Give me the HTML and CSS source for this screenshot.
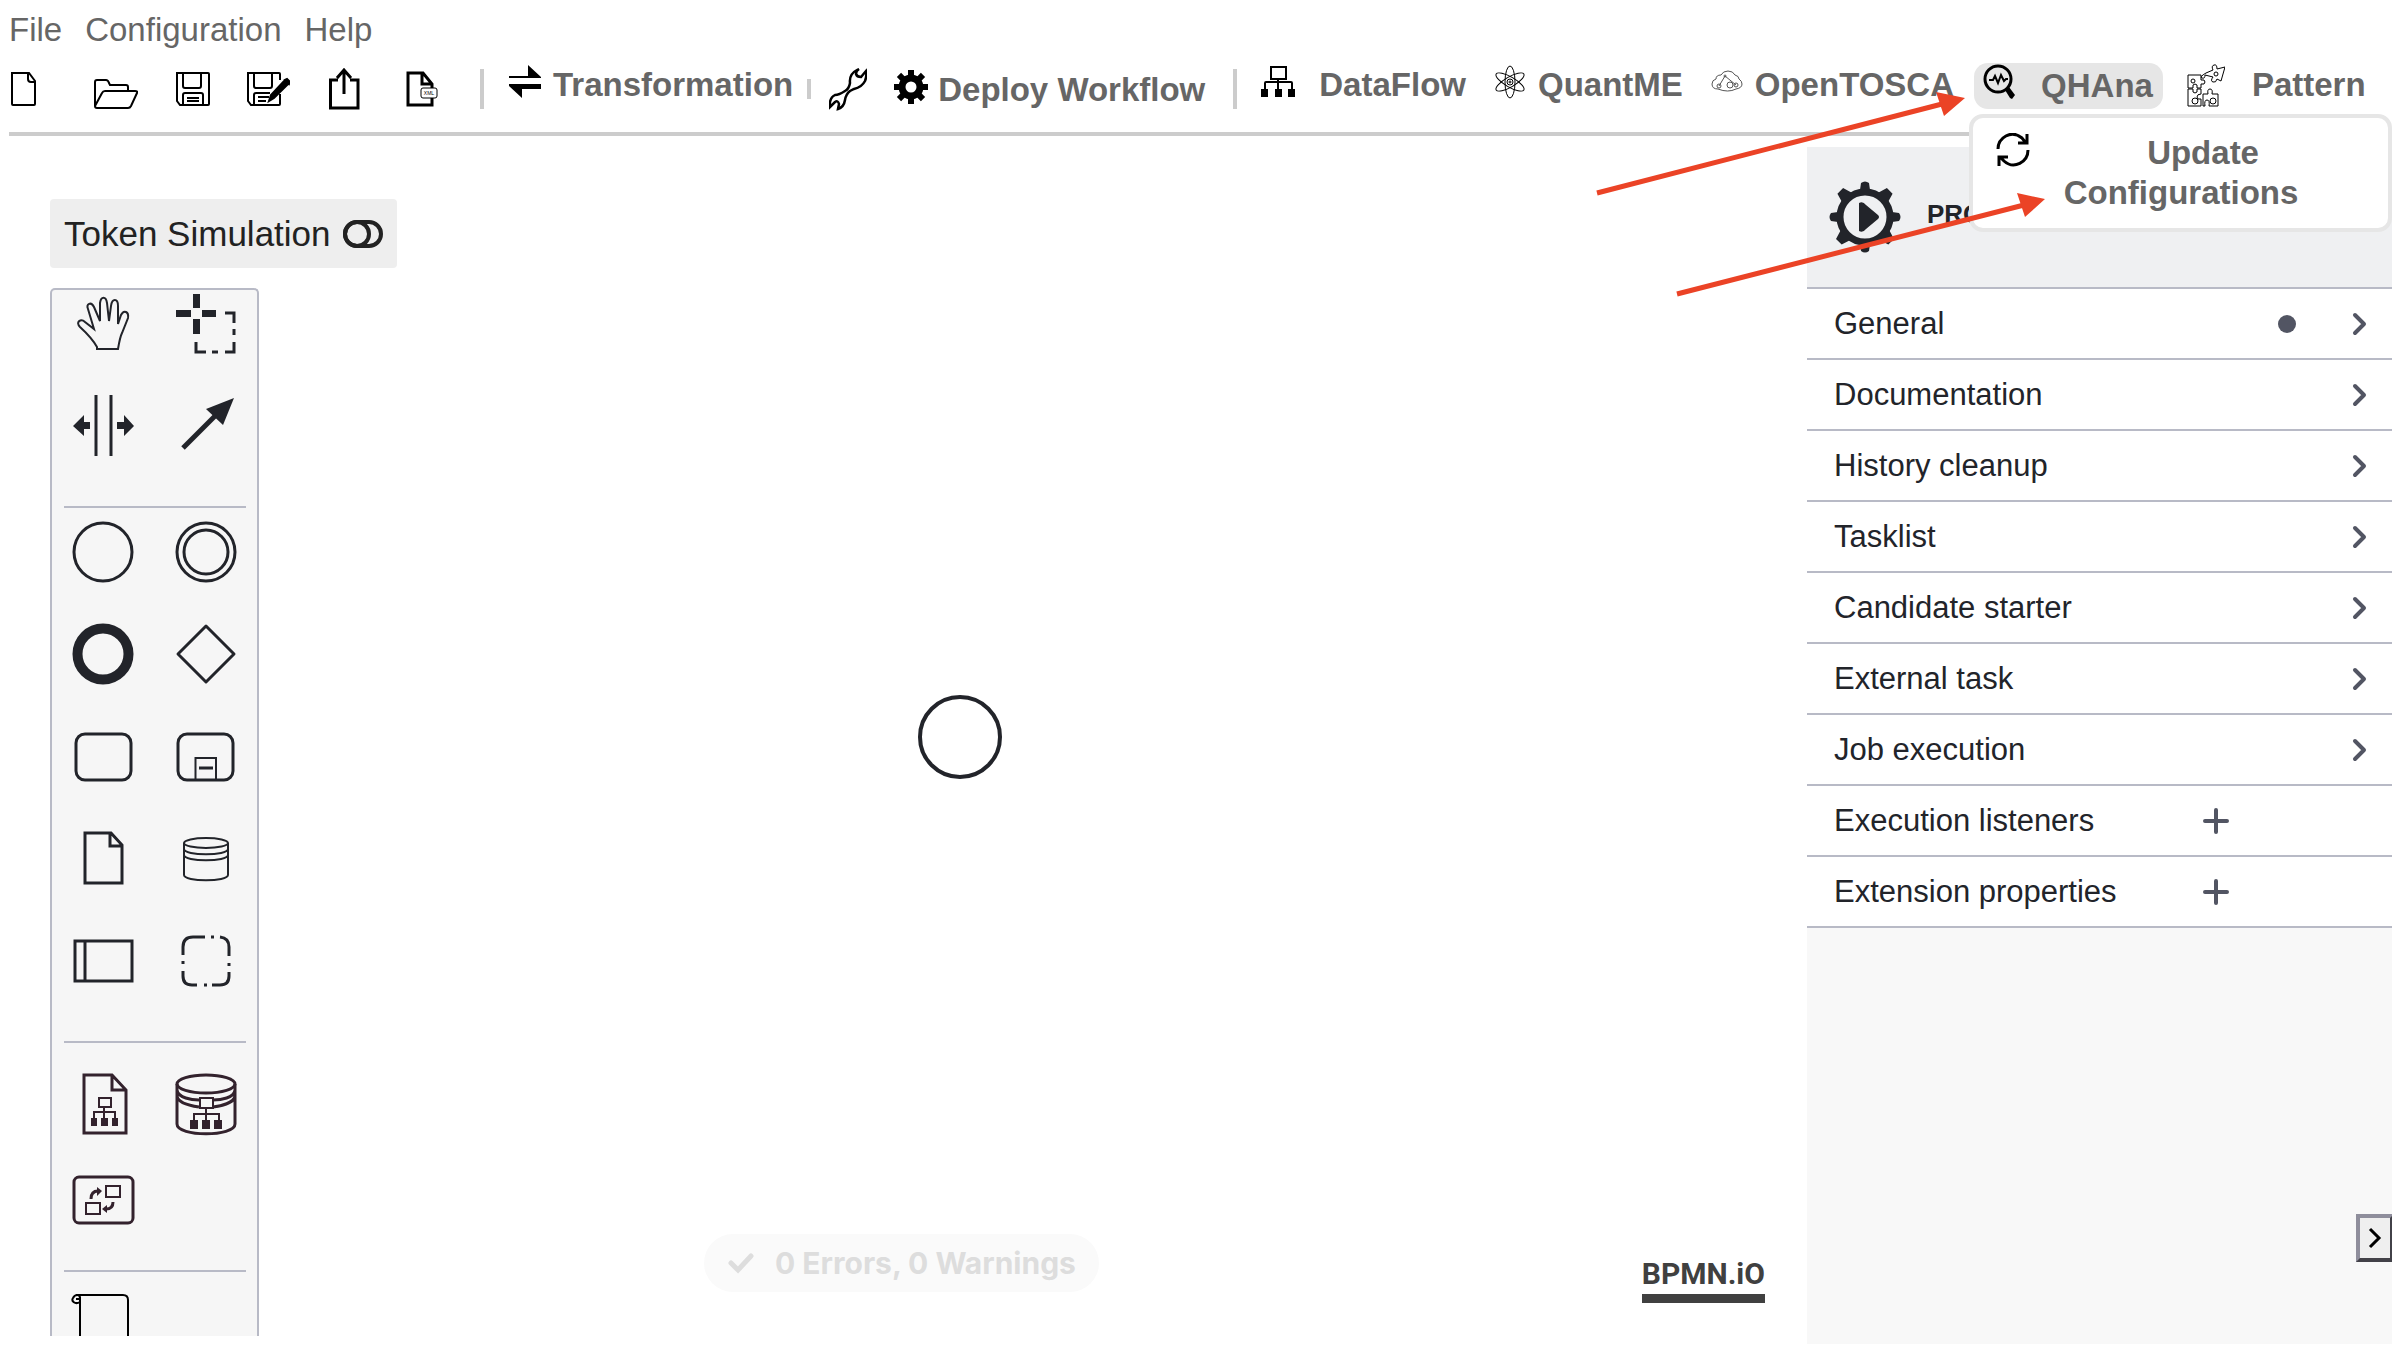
FILE: index.html
```html
<!DOCTYPE html>
<html lang="en">
<head>
<meta charset="utf-8">
<title>Workflow Modeler</title>
<link rel="stylesheet" href="styles.css">
</head>
<body>
<header class="header">
  <nav class="menu">
    <button type="button">File</button>
    <button type="button">Configuration</button>
    <button type="button">Help</button>
  </nav>
  <div class="toolbar">
    <div class="file-tools">
      <button type="button" aria-label="New diagram"><svg width="52" height="44" viewBox="0 0 52 44" class="line"><path d="M2 6h17l6 8v23q0 1-1 1H3q-1 0-1-1zM18 6v6q0 3 3 3h5"/></svg></button>
      <button type="button" aria-label="Open diagram"><svg width="44" height="44" viewBox="0 0 44 44" class="line"><path d="M1 39V15q0-2 2-2h9q2 0 3 3l1 2h16q2 0 2 2v4M1 39l7-13q1-2 3-2h30q3 0 2 2l-6 13q-1 2-3 2H3q-2 0-2-2z"/></svg></button>
      <button type="button" aria-label="Save diagram"><svg width="44" height="44" viewBox="0 0 44 44" class="line"><path d="M7 6h31q1 0 1 1v30q0 1-1 1H10l-3-4zM13 6v13q0 2 2 2h14q2 0 2-2V6M13 38V28q0-2 2-2h16q2 0 2 2v10M17 31h12M17 34h12"/></svg></button>
      <button type="button" aria-label="Save diagram as"><svg width="44" height="44" viewBox="0 0 44 44" class="line"><path d="M34 27v10q0 1-1 1H5l-3-4V6h31q1 0 1 1v6M8 6v13q0 2 2 2h14q2 0 2-2V6M8 38V28q0-2 2-2h14M12 30h11M12 34h8"/><path d="M23 34l2-6 13-14 4 3-14 14zM39 13l2-1 3 3-1 2z" fill="#000"/></svg></button>
      <button type="button" aria-label="Export"><svg width="44" height="44" viewBox="0 0 44 44" class="line thick"><path d="M16 13H8.500v28H36V13H28M22 27V4M15 11l7-8 7 8"/></svg></button>
      <button type="button" aria-label="Save as XML"><svg width="44" height="44" viewBox="0 0 44 44" class="line"><path class="thick" d="M34 30v8H10V6h15l9 11v5M24 6v11h9"/><rect x="23" y="21" width="16" height="10" rx="2" fill="#fff" stroke-width="1"/><text x="31" y="28" class="tiny">XML</text></svg></button>
    </div>
    <span class="sep"></span>
    <button type="button" class="tool transformation"><svg width="32" height="46" viewBox="0 0 32 46"><path d="M0 14h19V3l13 12v1H0zM32 22v5H13v9L0 24v-2z"/></svg>Transformation</button>
    <span class="sep short"></span>
    <button type="button" class="tool-icon" aria-label="Configure"><svg width="38" height="44" viewBox="0 0 38 44" class="line"><path stroke-width="2.500" d="M28 3q-8 4-7 13-1 6-5 8-6 4-10 4-6 3-5 12l5-5q3-2 4 2l-1 5q6-2 7-9 1-6 5-9l4-2q8-2 11-8 2-5 1-10l-5 6q-4 0-5-3 0-3 3-5z"/></svg></button>
    <button type="button" class="tool deploy"><svg width="34" height="46" viewBox="0 0 34 46"><g transform="translate(17 20)"><circle r="9" fill="none" stroke="#000" stroke-width="7"/><path d="M-3-17h6v8h-6zM-3 9h6v8h-6zM-17-3h8v6h-8zM9-3h8v6H9z"/><path transform="rotate(45)" d="M-3-17h6v8h-6zM-3 9h6v8h-6zM-17-3h8v6h-8zM9-3h8v6H9z"/></g></svg>Deploy Workflow</button>
    <span class="sep"></span>
    <div class="plugins">
      <button type="button" class="tool dataflow"><svg width="34" height="46" viewBox="0 0 34 46"><path class="line" d="M10 5h15v12H10zM17 17v10M4 27v-6q0-1 1-1h25q1 0 1 1v6M17 20v7"/><path d="M0 27h7v8H0zM14 27h7v8h-7zM27 27h7v8h-7z"/></svg>DataFlow</button>
      <button type="button" class="tool"><svg width="32" height="46" viewBox="0 0 32 46" class="line thin"><ellipse cx="16" cy="20" rx="5" ry="16"/><ellipse cx="16" cy="20" rx="5" ry="16" transform="rotate(60 16 20)"/><ellipse cx="16" cy="20" rx="5" ry="16" transform="rotate(120 16 20)"/><circle cx="16" cy="20" r="3"/><circle cx="16" cy="20" r="1"/></svg>QuantME</button>
      <button type="button" class="tool"><svg width="32" height="46" viewBox="0 0 32 46" class="line faint"><path d="M7 27q-6 0-6-5 0-4 4-5 0-4 5-4 2-4 7-4 5 0 7 4 4 1 4 4 3 2 3 5 0 4-6 5-8 4-18 0z"/><path d="M8 24l6-10 11 9"/><circle cx="14" cy="14" r="1"/><circle cx="8" cy="24" r="2"/><circle cx="19" cy="23" r="3"/><circle cx="25" cy="23" r="2"/></svg>OpenTOSCA</button>
      <div class="plugin-menu">
        <button type="button" class="tool active"><svg width="32" height="46" viewBox="0 0 32 46"><circle cx="15" cy="16" r="13" class="line thick"/><path class="line" d="M6 17h4l2-4 3 7 3-8 3 6 2-2h2"/><path d="M22 27l4-3 6 8-3 4-2-1z"/></svg>QHAna</button>
        <div class="popup">
          <button type="button" class="popup-item"><svg width="34" height="34" viewBox="0 0 34 34" class="line thick"><path d="M2 16C2 5 15-4 26 5l4 5M31 1v9h-9M32 17c0 12-14 20-24 11l-4-4M3 33v-9h9"/></svg><span>Update Configurations</span></button>
        </div>
      </div>
      <button type="button" class="tool pattern"><svg width="38" height="46" viewBox="0 0 38 46" class="line thin"><path d="M1 13h13v5q4-1 4 2t-4 2v4h-4q1-4-2-4t-2 4H1zM1 27h5q-1 4 2 4t2-4h4v5q-4 0-4 3t4 2v7H1zM16 44V32h5q-1-5 2-5t2 5h6v12h-9q1-6-2-6t-2 6zM19 11l7-3q-2-4 1-5t3 4l8-2-4 14-4-2q-1 4-4 3t0-5l-8-2q0 4-3 3t4-5z"/><circle cx="6" cy="19" r="2"/><circle cx="8" cy="39" r="3"/><circle cx="26" cy="39" r="3"/><circle cx="29" cy="12" r="2"/></svg>Pattern</button>
    </div>
  </div>
</header>

<main class="workspace">
  <section class="canvas" aria-label="Diagram">
    <button type="button" class="token">Token Simulation <svg width="40" height="28" viewBox="0 0 40 28" fill="none" stroke="#222" stroke-width="4"><rect x="2" y="2" width="36" height="24" rx="12"/><circle cx="14" cy="14" r="12"/></svg></button>
    <div class="palette">
      <div class="group first">
        <button type="button" aria-label="Hand tool"><svg viewBox="0 0 64 64"><path stroke-width="2" d="M26 57h21q2-12 4-16l6-15c1-6-4-9-7-3l-3 9V14c0-8-6-8-7 0l-2 15-2-18c-1-7-6-7-7 0v18l-6-14c-3-6-8-3-6 2l6 20-9-7c-4-4-10 0-5 5q12 11 17 20z"/></svg></button>
        <button type="button" aria-label="Lasso tool"><svg viewBox="0 0 64 64"><path class="solid" d="M2 18h15v7H2zM28 18h14v7H28zM19 2h7v14h-7zM19 27h7v15h-7z"/><path d="M51 21h9v10M60 37v6M60 50v10h-9M44 60h-6M32 60H22V50"/></svg></button>
        <button type="button" aria-label="Space tool"><svg viewBox="0 0 64 64"><path d="M25 1v61M40 1v61"/><path class="solid" d="M2 32l11-11v7h6v7h-6v7zM63 32L53 21v7h-7v7h7v7z"/></svg></button>
        <button type="button" aria-label="Connect"><svg viewBox="0 0 64 64"><path stroke-width="5" d="M9 54l32-32"/><path class="solid" d="M60 4L49 31 32 15z"/></svg></button>
      </div>
      <hr>
      <div class="group events">
        <button type="button" aria-label="Start event"><svg viewBox="0 0 64 64"><circle cx="32" cy="32" r="29"/></svg></button>
        <button type="button" aria-label="Intermediate event"><svg viewBox="0 0 64 64"><circle cx="32" cy="32" r="29"/><circle cx="32" cy="32" r="22"/></svg></button>
        <button type="button" aria-label="End event"><svg viewBox="0 0 64 64"><circle cx="32" cy="32" r="25.500" stroke-width="10"/></svg></button>
        <button type="button" aria-label="Gateway"><svg viewBox="0 0 64 64"><path stroke-linejoin="round" d="M32 4l28 28-28 28L4 32z"/></svg></button>
        <button type="button" aria-label="Task"><svg viewBox="0 0 64 64"><rect x="5" y="10" width="55" height="46" rx="9"/></svg></button>
        <button type="button" aria-label="Sub-process"><svg viewBox="0 0 64 64"><rect x="4" y="10" width="55" height="46" rx="9"/><path stroke-width="2" d="M21.500 56V34H42v22"/><path d="M25 44h14"/></svg></button>
        <button type="button" aria-label="Data object"><svg viewBox="0 0 64 64"><path d="M14 7h26l11 12v38H14zM39 7v13h12"/></svg></button>
        <button type="button" aria-label="Data store"><svg viewBox="0 0 64 64"><path stroke-width="2" d="M10 17v32c0 7 44 7 44 0V17M10 23c0 7 44 7 44 0M10 29c0 7 44 7 44 0"/><ellipse stroke-width="2" cx="32" cy="17" rx="22" ry="5"/></svg></button>
        <button type="button" aria-label="Participant"><svg viewBox="0 0 64 64"><path d="M4 13h57v40H4zM14 13v40"/></svg></button>
        <button type="button" aria-label="Group"><svg viewBox="0 0 64 64"><path d="M31 9H19q-10 0-10 10v8M9 33v3M9 43v5q0 9 9 9h5M30 57h3M38 57h8q9 0 9-9v-4M55 38v-3M55 28v-9q0-9-9-10M40 9h-3"/></svg></button>
      </div>
      <hr>
      <div class="group data">
        <button type="button" aria-label="Data map object"><svg viewBox="0 0 64 64"><path d="M13 3h28l14 15v43H13zM41 3v15h14"/><path stroke-width="2" d="M28 26h12v9H28zM33 35v11M23 46v-6h21v6"/><path class="solid" d="M20 46h6v8h-6zM30 46h7v8h-7zM41 46h6v8h-6z"/></svg></button>
        <button type="button" aria-label="Data map store"><svg viewBox="0 0 64 64"><ellipse cx="32" cy="12" rx="29" ry="9"/><path d="M3 12v40c0 13 58 13 58 0V12M3 18c1 8 15 10 22 10M39 28c8 0 21-2 22-10M3 24c1 7 15 10 22 11M39 35c8-1 21-4 22-11"/><path stroke-width="2" d="M26 26h13v10H26zM32 36v12M20 48v-6h25v6"/><path class="solid" d="M16 48h8v9h-8zM28 48h8v9h-8zM40 48h8v9h-8z"/></svg></button>
        <button type="button" aria-label="Transformation task"><svg viewBox="0 0 64 64"><rect x="3" y="9" width="59" height="46" rx="5"/><path stroke-width="2" d="M35 18h14v11H35zM15 35h14v11H15z"/><path d="M20 31q0-8 7-8M42 34q0 7-7 7"/><path class="solid" d="M26 19l5 4-5 5zM36 37l-5 4 5 4z"/></svg></button>
      </div>
      <hr>
      <div class="group policies">
        <button type="button" aria-label="Policy"><svg viewBox="0 0 64 64"><path stroke="#000" stroke-width="2" d="M5 1h47q5 0 5 5v58M9 64V3M9 8c-5 3-9-1-7-4 2-4 7-4 7 0M5 5h3"/></svg></button>
      </div>
    </div>
    <svg class="start-event" width="84" height="84" viewBox="0 0 84 84"><circle cx="42" cy="42" r="40"/></svg>
    <button type="button" class="status"><svg width="28" height="22" viewBox="0 0 28 22"><path d="M4 11l7 7L24 4"/></svg>0 Errors, 0 Warnings</button>
    <a class="logo" href="#bpmn">BPMN.iO</a>
  </section>

  <aside class="properties" aria-label="Properties">
    <div class="panel-head">
      <svg width="72" height="72" viewBox="-36 -36 72 72" fill="#22242a"><circle r="25" fill="none" stroke="#22242a" stroke-width="7"/><path d="M-5-27l1-7q4-3 8 0l1 7zM-5 27l1 7q4 3 8 0l1-7zM-27-5l-7 1q-3 4 0 8l7 1zM27-5l7 1q3 4 0 8l-7 1z"/><path transform="rotate(45)" d="M-8-26l3-10h8l3 10zM-8 26l3 10h8l3-10zM-26-8l-10 3v8l10 3zM26-8l10 3v8l-10 3z"/><path d="M-6-14q4-2 7 2L13-2q2 2 0 4L1 12q-3 4-7 2z"/></svg>
      <strong>PROCESS</strong>
    </div>
    <button type="button" class="row">General<i class="dot"></i><svg width="16" height="24" viewBox="0 0 16 24"><path d="M3 3l9 9-9 9"/></svg></button>
    <button type="button" class="row">Documentation<svg width="16" height="24" viewBox="0 0 16 24"><path d="M3 3l9 9-9 9"/></svg></button>
    <button type="button" class="row">History cleanup<svg width="16" height="24" viewBox="0 0 16 24"><path d="M3 3l9 9-9 9"/></svg></button>
    <button type="button" class="row">Tasklist<svg width="16" height="24" viewBox="0 0 16 24"><path d="M3 3l9 9-9 9"/></svg></button>
    <button type="button" class="row">Candidate starter<svg width="16" height="24" viewBox="0 0 16 24"><path d="M3 3l9 9-9 9"/></svg></button>
    <button type="button" class="row">External task<svg width="16" height="24" viewBox="0 0 16 24"><path d="M3 3l9 9-9 9"/></svg></button>
    <button type="button" class="row">Job execution<svg width="16" height="24" viewBox="0 0 16 24"><path d="M3 3l9 9-9 9"/></svg></button>
    <button type="button" class="row add">Execution listeners<svg width="28" height="28" viewBox="0 0 28 28"><path d="M14 3v22M3 14h22"/></svg></button>
    <button type="button" class="row add">Extension properties<svg width="28" height="28" viewBox="0 0 28 28"><path d="M14 3v22M3 14h22"/></svg></button>
    <button type="button" class="collapse" aria-label="Collapse panel"><svg width="14" height="22" viewBox="0 0 14 22" class="line thick"><path d="M2 2l9 9-9 9"/></svg></button>
  </aside>
</main>

<svg class="annotations" width="460" height="210" viewBox="1592 90 460 210" aria-hidden="true">
  <path class="shaft" d="M1597 193L1942 104M1677 294L2024 205"/>
  <path d="M1965 98L1936 92l8 24zM2045 199l-28-6 8 24z"/>
</svg>
</body>
</html>
```
FILE: styles.css
```css
* { box-sizing: border-box; }

body {
  margin: 0;
  height: 100vh;
  display: flex;
  flex-direction: column;
  overflow: hidden;
  background: #fff;
  color: #22242a;
  font-family: "Liberation Sans", Arial, sans-serif;
}

button {
  margin: 0;
  padding: 0;
  border: 0;
  background: none;
  color: inherit;
  font: inherit;
  cursor: pointer;
}

svg { display: block; flex: none; }

.line { fill: none; stroke: #000; stroke-width: 2; }
.thick { stroke-width: 3; }
.thin { stroke-width: 1; }
.faint { stroke-width: 1; stroke: #555; }
.tiny { font-size: 5px; fill: #000; stroke: none; text-anchor: middle; }

/* Header */
.header { margin-left: 9px; border-bottom: 4px solid #ccc; padding-bottom: 3px; }

.menu {
  display: flex;
  gap: 23px;
  padding: 11px 0 0;
  color: #666;
  font-size: 33px;
  line-height: 38px;
}

.toolbar {
  display: flex;
  align-items: center;
  height: 80px;
  white-space: nowrap;
}

.file-tools { display: flex; gap: 32px; padding: 0 38px 0 1px; }

.sep { width: 4px; height: 40px; background: #ccc; }
.sep.short { height: 20px; margin: 0 18px 0 14px; }

.tool {
  display: flex;
  align-items: center;
  gap: 12px;
  height: 46px;
  margin-bottom: 8px;
  color: #666;
  font-size: 33px;
  font-weight: bold;
  line-height: 38px;
}

.transformation { margin-left: 25px; }
.deploy { gap: 10px; margin: 2px 28px 0 27px; }
.plugins { display: flex; align-items: center; gap: 28px; margin-left: 24px; }
.dataflow { gap: 24px; }
.pattern { gap: 27px; }

.plugin-menu { position: relative; margin: 0 -4px 6px -8px; }

.active {
  gap: 26px;
  margin-bottom: 0;
  padding: 0 10px 0 9px;
  border-radius: 14px;
  background: #e6e6e6;
}

.popup {
  position: absolute;
  z-index: 5;
  top: 51px;
  left: -5px;
  width: 423px;
  border: 4px solid #e6e6e6;
  border-radius: 14px;
  background: #fff;
}

.popup-item {
  display: flex;
  align-items: flex-start;
  width: 100%;
  padding: 15px 80px 15px 23px;
  color: #666;
  font-size: 33px;
  font-weight: bold;
  line-height: 40px;
  white-space: normal;
}

.popup-item span { flex: 1; margin-left: 24px; text-align: center; text-indent: 44px; }

/* Workspace */
.workspace { display: flex; flex: 1; min-height: 0; padding-bottom: 14px; }

.canvas {
  position: relative;
  display: flex;
  flex: 1;
  flex-direction: column;
  align-items: flex-start;
  gap: 20px;
  min-width: 0;
  padding: 63px 0 8px 50px;
}

.token {
  display: flex;
  align-items: center;
  gap: 12px;
  height: 69px;
  padding: 0 14px;
  border-radius: 4px;
  background: #eee;
  color: #222;
  font-size: 35px;
}

.palette {
  flex: 1;
  min-height: 0;
  width: 209px;
  overflow: hidden;
  border: 2px solid #b8bac6;
  border-bottom: 0;
  border-radius: 5px 5px 0 0;
  background: #f6f6f6;
}

.palette hr { height: 2px; margin: 0 11px 0 12px; border: 0; background: #b8bac6; }

.group {
  display: grid;
  grid-template-columns: 1fr 1fr;
  gap: 38px 0;
  justify-items: center;
}

.group svg { width: 64px; height: 64px; fill: none; stroke: #22242a; stroke-width: 3; }
.group .solid { fill: #22242a; stroke: none; }
.first { padding: 2px 0 48px; }
.events { padding: 12px 0 49px; }
.data { row-gap: 32px; padding: 29px 0 38px; }
.group.data svg { stroke: #33222d; }
.group.data .solid { fill: #33222d; }
.policies { padding-top: 22px; }

.start-event {
  position: absolute;
  top: 559px;
  left: 918px;
  fill: #fff;
  stroke: #22242a;
  stroke-width: 4;
}

.status {
  position: absolute;
  left: 704px;
  bottom: 52px;
  display: flex;
  align-items: center;
  gap: 20px;
  height: 58px;
  padding: 0 23px;
  border-radius: 29px;
  background: #fafafa;
  color: #ddd;
  font: bold 30px Inter, sans-serif;
  white-space: nowrap;
}

.status path { fill: none; stroke: #ddd; stroke-width: 5; stroke-linecap: round; }

.logo {
  position: absolute;
  right: 42px;
  bottom: 41px;
  border-bottom: 9px solid #404040;
  color: #404040;
  font: bold 30px/40px Roboto, sans-serif;
  text-decoration: none;
}

/* Properties panel */
.properties {
  position: relative;
  display: flex;
  flex: 0 0 585px;
  flex-direction: column;
  margin-top: 11px;
  overflow: hidden;
  background: #f8f8f8;
}

.panel-head {
  display: flex;
  align-items: center;
  gap: 26px;
  height: 142px;
  padding: 0 0 1px 22px;
  border-bottom: 2px solid #b8bac6;
  background: #eff0f2;
  font-size: 26px;
}

.panel-head strong { padding-bottom: 4px; }

.row {
  display: flex;
  align-items: center;
  height: 71px;
  padding: 0 24px 0 27px;
  border-bottom: 2px solid #b8bac6;
  background: #fff;
  font-size: 31px;
}

.row svg { margin-left: auto; fill: none; stroke: #525563; stroke-width: 4; stroke-linecap: round; stroke-linejoin: round; }
.row.add svg { margin-right: 138px; }
.dot { width: 18px; height: 18px; margin-left: auto; border-radius: 50%; background: #525563; }
.row .dot + svg { margin-left: 56px; }

.collapse {
  position: absolute;
  right: -2px;
  bottom: 82px;
  display: grid;
  place-items: center;
  width: 38px;
  height: 48px;
  border: 4px outset #8f8e9c;
  background: #efefef;
}

/* Red pointers drawn over the page */
.annotations { position: absolute; z-index: 10; top: 90px; left: 1592px; fill: #eb4326; pointer-events: none; }
.shaft { fill: none; stroke: #eb4326; stroke-width: 5; }
```
